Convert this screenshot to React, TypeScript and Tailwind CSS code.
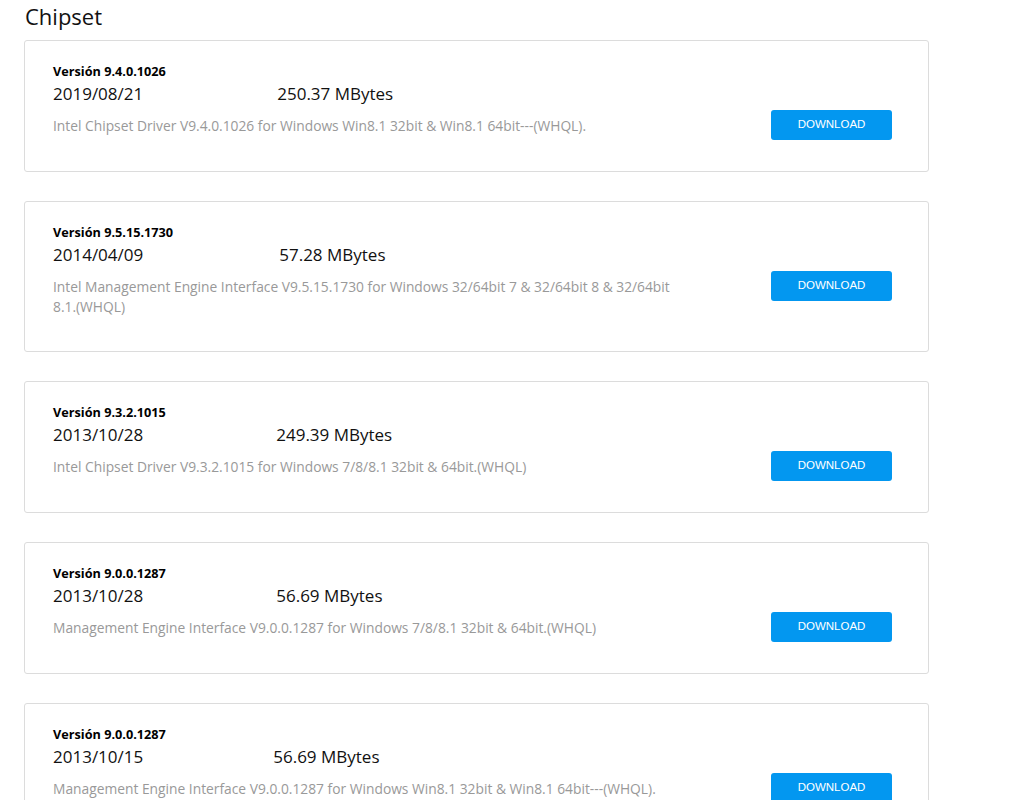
import React from "react";

type Item = {
  version: string;
  date: string;
  size: string;
  sizeClass: string;
  desc: string;
};

const items: Item[] = [
  {
    version: "Versión 9.4.0.1026",
    date: "2019/08/21",
    size: "250.37 MBytes",
    sizeClass: "ml-[134px]",
    desc: "Intel Chipset Driver V9.4.0.1026 for Windows Win8.1 32bit & Win8.1 64bit---(WHQL).",
  },
  {
    version: "Versión 9.5.15.1730",
    date: "2014/04/09",
    size: "57.28 MBytes",
    sizeClass: "ml-[136px]",
    desc: "Intel Management Engine Interface V9.5.15.1730 for Windows 32/64bit 7 & 32/64bit 8 & 32/64bit 8.1.(WHQL)",
  },
  {
    version: "Versión 9.3.2.1015",
    date: "2013/10/28",
    size: "249.39 MBytes",
    sizeClass: "ml-[133px]",
    desc: "Intel Chipset Driver V9.3.2.1015 for Windows 7/8/8.1 32bit & 64bit.(WHQL)",
  },
  {
    version: "Versión 9.0.0.1287",
    date: "2013/10/28",
    size: "56.69 MBytes",
    sizeClass: "ml-[133px]",
    desc: "Management Engine Interface V9.0.0.1287 for Windows 7/8/8.1 32bit & 64bit.(WHQL)",
  },
  {
    version: "Versión 9.0.0.1287",
    date: "2013/10/15",
    size: "56.69 MBytes",
    sizeClass: "ml-[130px]",
    desc: "Management Engine Interface V9.0.0.1287 for Windows Win8.1 32bit & Win8.1 64bit---(WHQL).",
  },
];

export default function App() {
  return (
    <div
      className="min-h-screen bg-white pl-6 pr-[92px] text-black"
      style={{ fontFamily: '"Open Sans", "Noto Sans", Arial, sans-serif' }}
    >
      <h1 className="pt-px pl-px text-[22px] leading-[30px] font-normal text-[#111]">Chipset</h1>
      <div className="mt-[9px] flex flex-col gap-[29px]">
        {items.map((it, i) => (
          <div
            key={i}
            className="flex rounded-[3px] border border-[#dcdcdc] bg-white pt-[21px] pb-[31px] pl-[28px] pr-[36px]"
          >
            <div className="min-w-0 flex-1 pr-[88px] pb-[3px]">
              <div className="text-[12.7px] leading-[18px] font-bold text-black">{it.version}</div>
              <div className="mt-[2px] flex text-[17px] leading-[24px] text-[#111]">
                <span>{it.date}</span>
                <span className={it.sizeClass}>{it.size}</span>
              </div>
              <p className="mt-[10px] text-[13.8px] leading-[20px] text-[#999]">{it.desc}</p>
            </div>
            <div className="shrink-0 pt-[48px]">
              <button
                className="h-[30px] w-[121px] rounded-[3px] bg-[#0397f0] text-[11.5px] text-white"
                style={{ fontFamily: '"Liberation Sans", Arial, sans-serif' }}
              >
                DOWNLOAD
              </button>
            </div>
          </div>
        ))}
      </div>
    </div>
  );
}
